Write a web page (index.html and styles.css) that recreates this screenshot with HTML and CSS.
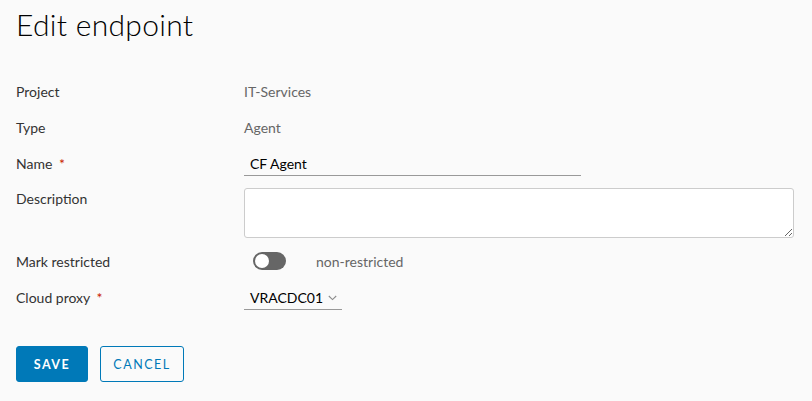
FILE: index.html
```html
<!DOCTYPE html>
<html lang="en">
<head>
  <meta charset="UTF-8" />
  <meta name="viewport" content="width=device-width, initial-scale=1" />
  <title>Edit endpoint</title>
  <link rel="stylesheet" href="styles.css">
</head>
<body>

  <h2 class="page-title">Edit endpoint</h2>

  <form class="form">
    <div class="form-row">
      <label class="form-label">Project</label>
      <div class="form-value">IT-Services</div>
    </div>

    <div class="form-row">
      <label class="form-label">Type</label>
      <div class="form-value">Agent</div>
    </div>

    <div class="form-row">
      <label class="form-label">Name <span class="required">*</span></label>
      <div class="form-control">
        <input class="text-input" type="text" value="CF Agent">
      </div>
    </div>

    <div class="form-row form-row-top">
      <label class="form-label">Description</label>
      <div class="form-control">
        <textarea class="text-area"></textarea>
      </div>
    </div>

    <div class="form-row">
      <label class="form-label">Mark restricted</label>
      <div class="form-control toggle-wrap">
        <span class="toggle"><span class="toggle-knob"></span></span>
        <span class="toggle-text">non-restricted</span>
      </div>
    </div>

    <div class="form-row">
      <label class="form-label">Cloud proxy <span class="required">*</span></label>
      <div class="form-control">
        <div class="select">
          <span>VRACDC01</span>
          <svg class="chevron" width="9" height="6" viewBox="0 0 9 6">
            <path d="M0.8 1 L4.5 4.6 L8.2 1" fill="none" stroke="#8c8c8c" stroke-width="1.1"/>
          </svg>
        </div>
      </div>
    </div>

    <div class="buttons">
      <button type="button" class="btn btn-primary">Save</button>
      <button type="button" class="btn btn-outline">Cancel</button>
    </div>
  </form>

</body>
</html>
```

FILE: styles.css
```css
* {
  box-sizing: border-box;
  margin: 0;
  padding: 0;
}

body {
  font-family: Lato, "Open Sans", sans-serif;
  background: #fafafa;
  color: #333;
  padding: 0 16px;
}

.page-title {
  font-size: 30px;
  font-weight: 300;
  color: #000;
  line-height: 36px;
  padding-top: 6px;
  letter-spacing: 0.3px;
}

.form {
  margin-top: 31px;
}

.form-row {
  display: flex;
  align-items: center;
  min-height: 36px;
}

.form-row-top {
  align-items: flex-start;
  min-height: 62px;
  padding-top: 7px;
}

.form-row-top .form-label {
  padding-top: 2px;
}

.form-label {
  width: 228px;
  font-size: 14px;
  color: #333;
}

.required {
  color: #c92100;
  margin-left: 3px;
}

.form-value {
  font-size: 14px;
  color: #666;
}

.text-input {
  width: 337px;
  height: 24px;
  border: none;
  border-bottom: 1px solid #999;
  background: transparent;
  font-family: inherit;
  font-size: 14px;
  color: #000;
  padding: 0 6px;
  outline: none;
  margin-top: 2px;
}

.text-area {
  display: block;
  width: 550px;
  height: 50px;
  border: 1px solid #ccc;
  border-radius: 3px;
  background: #fff;
  font-family: inherit;
  font-size: 14px;
}

.toggle-wrap {
  display: flex;
  align-items: center;
  padding-left: 9px;
}

.toggle {
  display: flex;
  align-items: center;
  width: 33px;
  height: 18px;
  border-radius: 9px;
  background: #666;
  padding-left: 2px;
}

.toggle-knob {
  width: 14px;
  height: 14px;
  border-radius: 50%;
  background: #fff;
}

.toggle-text {
  margin-left: 30px;
  font-size: 14px;
  color: #666;
}

.select {
  display: flex;
  align-items: center;
  width: 98px;
  height: 24px;
  border-bottom: 1px solid #999;
  padding-left: 6px;
  font-size: 14px;
  color: #000;
  margin-top: 2px;
}

.chevron {
  margin-left: 5px;
}

.buttons {
  display: flex;
  gap: 12px;
  margin-top: 31px;
}

.btn {
  height: 36px;
  border-radius: 3px;
  font-family: inherit;
  font-size: 12.5px;
  letter-spacing: 1.5px;
  text-transform: uppercase;
  cursor: pointer;
}

.btn-primary {
  width: 72px;
  background: #0079b8;
  border: 1px solid #0079b8;
  color: #fff;
  font-weight: 700;
}

.btn-outline {
  width: 84px;
  background: transparent;
  border: 1px solid #0079b8;
  color: #0079b8;
  font-weight: 400;
}
```
